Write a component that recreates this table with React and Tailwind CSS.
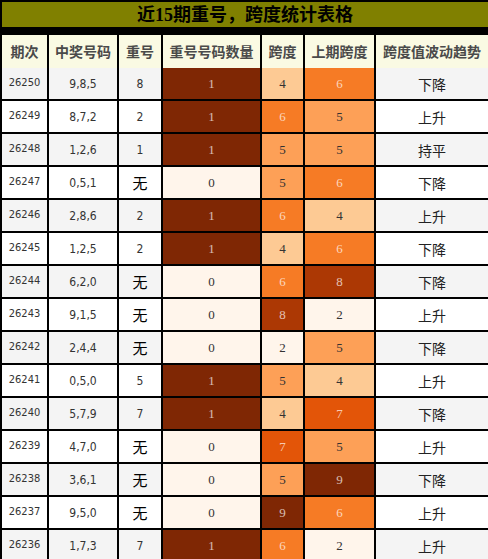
import React from 'react';

const rows = [
  ['26250', '9,8,5', '8', 1, 4, 6, '下降'],
  ['26249', '8,7,2', '2', 1, 6, 5, '上升'],
  ['26248', '1,2,6', '1', 1, 5, 5, '持平'],
  ['26247', '0,5,1', '无', 0, 5, 6, '下降'],
  ['26246', '2,8,6', '2', 1, 6, 4, '上升'],
  ['26245', '1,2,5', '2', 1, 4, 6, '下降'],
  ['26244', '6,2,0', '无', 0, 6, 8, '下降'],
  ['26243', '9,1,5', '无', 0, 8, 2, '上升'],
  ['26242', '2,4,4', '无', 0, 2, 5, '下降'],
  ['26241', '0,5,0', '5', 1, 5, 4, '上升'],
  ['26240', '5,7,9', '7', 1, 4, 7, '下降'],
  ['26239', '4,7,0', '无', 0, 7, 5, '上升'],
  ['26238', '3,6,1', '无', 0, 5, 9, '下降'],
  ['26237', '9,5,0', '无', 0, 9, 6, '上升'],
  ['26236', '1,7,3', '7', 1, 6, 2, '上升'],
];

// heat colours for span values
const spanColor = {
  2: 'bg-[#fff5eb] text-[#333]',
  4: 'bg-[#fdca94] text-[#333]',
  5: 'bg-[#fda057] text-[#333]',
  6: 'bg-[#f67b25] text-white/70',
  7: 'bg-[#e35508] text-white/70',
  8: 'bg-[#ac3804] text-white/70',
  9: 'bg-[#7f2704] text-white/70',
};

const countColor = {
  0: 'bg-[#fff5eb] text-[#333]',
  1: 'bg-[#7f2704] text-white/70',
};

const headers = ['期次', '中奖号码', '重号', '重号号码数量', '跨度', '上期跨度', '跨度值波动趋势'];

const sans = "font-['Noto_Sans_CJK_SC',sans-serif]";
const digits = "font-['DejaVu_Sans_Condensed','Liberation_Sans','Noto_Sans_CJK_SC',sans-serif]";
const serif = "font-['Liberation_Serif',serif]";

export default function App() {
  return (
    <div className="w-[488px] h-[559px] overflow-hidden bg-black pt-[2px] pl-[2px]">
      <div className="grid grid-cols-[45px_68px_42px_97px_41px_69px_1fr] auto-rows-[31px] gap-[2px]">
        {/* title */}
        <div className="col-span-7 h-[25px] bg-[#808000] flex items-center justify-center text-[18px] font-bold text-black font-['Liberation_Serif','Noto_Sans_CJK_SC',serif] leading-none">
          近15期重号，跨度统计表格
        </div>

        {headers.map((h) => (
          <div
            key={h}
            className={`h-[33px] bg-[#fafae3] flex items-center justify-center text-[14px] font-bold text-[#4a4a4a] ${sans}`}
          >
            {h}
          </div>
        ))}

        {rows.map((r, i) => {
          const bg = i % 2 === 0 ? 'bg-[#f4f4f4]' : 'bg-white';
          return (
            <React.Fragment key={r[0]}>
              <div className={`${bg} flex items-center justify-center text-[11px] text-[#333] ${digits}`}>{r[0]}</div>
              <div className={`${bg} flex items-center justify-center text-[12px] text-[#333] ${digits}`}>{r[1]}</div>
              {r[2] === '无' ? (
                <div className={`${bg} flex items-center justify-center pt-[2px] text-[15px] text-black ${sans}`}>无</div>
              ) : (
                <div className={`${bg} flex items-center justify-center text-[12px] text-[#333] ${digits}`}>{r[2]}</div>
              )}
              <div className={`${countColor[r[3]]} flex items-center justify-center text-[13px] ${serif}`}>{r[3]}</div>
              <div className={`${spanColor[r[4]]} flex items-center justify-center text-[13px] ${serif}`}>{r[4]}</div>
              <div className={`${spanColor[r[5]]} flex items-center justify-center text-[13px] ${serif}`}>{r[5]}</div>
              <div className={`${bg} flex items-center justify-center pt-[1px] text-[14px] text-[#222] ${sans}`}>{r[6]}</div>
            </React.Fragment>
          );
        })}
      </div>
    </div>
  );
}
